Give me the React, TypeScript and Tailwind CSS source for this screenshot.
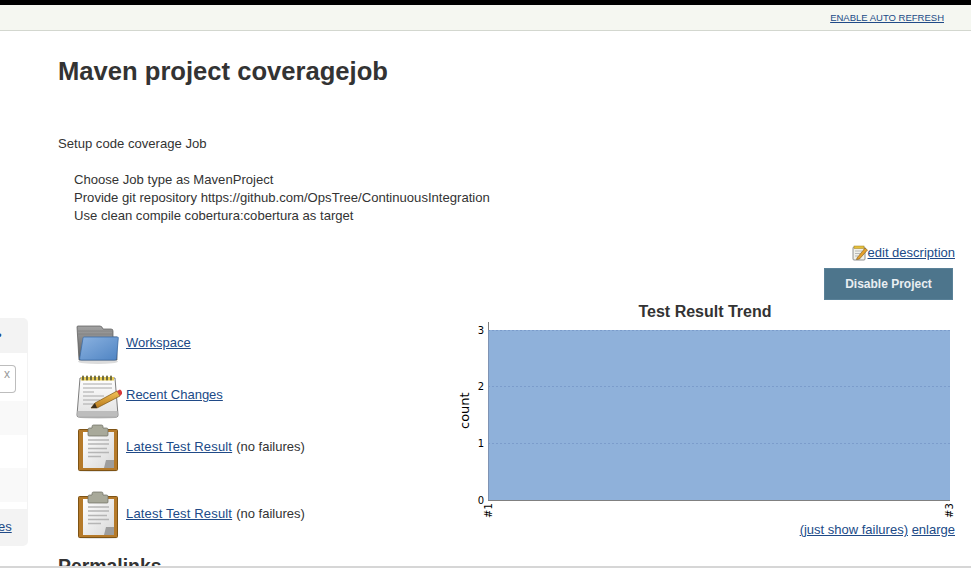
import type { ReactNode } from "react";

function Folder() {
  return (
    <svg width="48" height="48" viewBox="0 0 48 48" className="shrink-0">
      <defs>
        <linearGradient id="fb" x1="0" y1="0" x2="0" y2="1"><stop offset="0" stopColor="#a3a3a3" /><stop offset="1" stopColor="#5c5c5c" /></linearGradient>
        <linearGradient id="ff" x1="0" y1="0" x2="1" y2="1"><stop offset="0" stopColor="#8bb2e0" /><stop offset="1" stopColor="#4f84c3" /></linearGradient>
      </defs>
      <ellipse cx="22" cy="42.500" rx="20" ry="2.500" fill="#dcdcdc" />
      <path d="M1 8 Q1 7 2 7 H24 Q26 7 27 10 H35 Q37 10 37 12 V18 H41 V41 H3 Z" fill="url(#fb)" stroke="#555" strokeWidth="0.7" />
      <path d="M2 12 H36 M2 15 H36" stroke="#808080" strokeWidth="0.8" />
      <path d="M8 18 H41.500 Q42.500 18 42.300 19 L40.500 39.500 Q40.400 41 39 41 H5 Q3.500 41 3.700 39.500 L7 19 Q7.200 18 8 18 Z" fill="url(#ff)" stroke="#3f6ea8" strokeWidth="0.8" />
    </svg>
  );
}

function Notepad() {
  return (
    <svg width="48" height="48" viewBox="0 0 48 48" className="shrink-0">
      <defs>
        <linearGradient id="np" x1="0" y1="0" x2="0" y2="1"><stop offset="0" stopColor="#ffffff" /><stop offset="1" stopColor="#e0e0e0" /></linearGradient>
        <linearGradient id="pen" x1="0" y1="0" x2="0" y2="1"><stop offset="0" stopColor="#f3c45a" /><stop offset="1" stopColor="#b9791b" /></linearGradient>
      </defs>
      <ellipse cx="22" cy="46.500" rx="19" ry="1.500" fill="#e2e2e2" />
      <path d="M4 7 H39 L42 44 Q42 46 40.500 46 H2.500 Q1 46 1 44 Z" fill="url(#np)" stroke="#6e6e6e" strokeWidth="0.9" />
      <path d="M1.500 40 H41.500 V44.500 Q41.500 45.500 40.500 45.500 H2.500 Q1.500 45.500 1.500 44.500 Z" fill="#bdbdbd" />
      <rect x="5" y="6" width="33" height="3.500" fill="#e8cd55" />
      {[6, 10, 14, 18, 22, 26, 30, 34].map((x) => (
        <rect key={x} x={x} y="4.500" width="2" height="5" rx="1" fill="#6e6a3c" />
      ))}
      <path d="M7 13 H36 M7 17 H36 M7 21 H18 M7 25 H28 M7 29 H24 M7 33 H20" stroke="#a8a8a8" strokeWidth="1" />
      <path d="M19 32 L41 20 L44 25 L21 37 L15 37 Z" fill="url(#pen)" stroke="#7d5512" strokeWidth="0.7" />
      <path d="M19 32 L15 37 L21 37 Z" fill="#3a3020" />
      <path d="M41 20 L44 18.500 Q45.500 19 46 21 L46 23 L44 25 Z" fill="#d83a3a" />
    </svg>
  );
}

function Clipboard({ id }: { id: string }) {
  return (
    <svg width="48" height="49" viewBox="0 0 48 49" className="shrink-0">
      <defs>
        <linearGradient id={id} x1="0" y1="0" x2="1" y2="1"><stop offset="0" stopColor="#ffffff" /><stop offset="1" stopColor="#d8d8d8" /></linearGradient>
      </defs>
      <ellipse cx="22" cy="48" rx="19" ry="1" fill="#e2e2e2" />
      <rect x="2.500" y="6.500" width="39" height="41" rx="1" fill="#b57a2a" stroke="#7e5314" strokeWidth="1" />
      <path d="M7 9 H38 V37 L30 45 H7 Z" fill={`url(#${id})`} />
      <path d="M28 45 L30 37 H38 V45 Z" fill="#9d9d9d" />
      <path d="M16 5 V3.500 Q16 2 17.500 2 H25.500 Q27 2 27 3.500 V5 H30.500 Q32 5 32 6.500 V12 Q32 13 31 13 H13 Q12 13 12 12 V6.500 Q12 5 13.500 5 Z" fill="#a8a99a" stroke="#6a6c5e" strokeWidth="0.7" />
      <path d="M12 17 H33 M12 21 H33 M12 25.500 H31 M12 29.500 H33 M12 33.500 H25" stroke="#b5b5b5" strokeWidth="1.600" />
    </svg>
  );
}

function PenIcon() {
  return (
    <svg width="16" height="16" viewBox="0 0 16 16" className="shrink-0">
      <rect x="1" y="2" width="12" height="13" rx="1" fill="#f0f0ea" stroke="#777" strokeWidth="0.8" />
      <rect x="2" y="1" width="10" height="2.500" fill="#e5bf3d" stroke="#a07f1c" strokeWidth="0.5" />
      <path d="M3 6 H10 M3 8.500 H8 M3 11 H6" stroke="#aaa" strokeWidth="0.8" />
      <path d="M5 13 L13 3 L15.500 5 L7.500 14 L4.500 14.500 Z" fill="#e4a02d" stroke="#7a5510" strokeWidth="0.6" />
    </svg>
  );
}

function Chart() {
  return (
    <svg width="513" height="220" viewBox="0 0 513 220" className="block">
      <g style={{ fontFamily: "'DejaVu Sans', sans-serif" }}>
        <text x="255" y="17" textAnchor="middle" fontSize="16" fontWeight="700" fill="#333" style={{ fontFamily: "'Liberation Sans', sans-serif" }}>Test Result Trend</text>
        <rect x="38" y="30" width="462" height="170" fill="#8fb1da" />
        {[30, 86, 143].map((y) => (
          <line key={y} x1="38" x2="500" y1={y + 0.5} y2={y + 0.5} stroke="#7b9ccb" strokeWidth="1" strokeDasharray="2 2" />
        ))}
        <line x1="38.500" x2="38.500" y1="22" y2="30" stroke="#808080" strokeWidth="1" />
        <line x1="38.500" x2="38.500" y1="30" y2="200" stroke="#7f93b3" strokeWidth="1" />
        <line x1="38" x2="500" y1="200.500" y2="200.500" stroke="#808080" strokeWidth="1" />
        {[["3", 34], ["2", 90], ["1", 147], ["0", 204]].map(([t, y]) => (
          <text key={t as string} x="34" y={y as number} textAnchor="end" fontSize="10" fill="#000">{t}</text>
        ))}
        <text transform="translate(19 129) rotate(-90)" fontSize="13" fill="#000">count</text>
        <text transform="translate(42 218) rotate(-90)" fontSize="10" fill="#000">#1</text>
        <text transform="translate(503 218) rotate(-90)" fontSize="10" fill="#000">#3</text>
      </g>
    </svg>
  );
}

function Row({ icon, href, note, className, linkClass }: { icon: ReactNode; href: string; note?: string; className?: string; linkClass?: string }) {
  return (
    <div className={`flex items-center ${className ?? ""}`}>
      {icon}
      <a href="#" className={`ml-[2px] text-[#204a87] underline ${linkClass ?? ""}`}>{href}</a>
      {note && <span className="ml-1">{note}</span>}
    </div>
  );
}

export default function App() {
  return (
    <div className="font-['Liberation_Sans',Arial,sans-serif] h-[568px] w-full overflow-hidden bg-white text-[13px] leading-[18px] text-[#333] flex flex-col">
      <div className="h-[5px] bg-black shrink-0" />
      <div className="h-[26px] shrink-0 bg-[#f5f7f1] border-b border-[#d3d7cf] flex items-center justify-end pr-[27px]">
        <a href="#" className="text-[9.5px] text-[#204a87] underline">ENABLE AUTO REFRESH</a>
      </div>
      <div className="flex-1 min-h-0 flex overflow-hidden">
        <aside className="w-[28px] shrink-0 pt-[287px]">
          <div className="h-[228px] rounded-r-[5px] bg-[#f3f3f3] overflow-hidden flex flex-col pr-[1px]">
            <div className="h-[35px] shrink-0 relative">
              <span className="absolute left-[-3px] top-[8px] text-[#204a87] font-bold">•</span>
            </div>
            <div className="h-[48px] shrink-0 bg-white pt-[12px]">
              <div className="h-[28px] w-[16px] rounded-r-[4px] border border-l-0 border-[#bdbdbd] bg-white flex items-center justify-center pb-[10px] pr-[1px] text-[12px] text-[#999]">x</div>
            </div>
            <div className="h-[34px] shrink-0 bg-[#f9f9f9]" />
            <div className="h-[33px] shrink-0 bg-white" />
            <div className="h-[34px] shrink-0 bg-[#f9f9f9]" />
            <div className="h-[7px] shrink-0 bg-white" />
            <div className="flex-1 leading-[36px]">
              <a href="#" className="block ml-[-2px] text-[#204a87] underline">es</a>
            </div>
          </div>
        </aside>
        <main className="flex-1 min-w-0 pl-[30px] pr-[16px]">
          <h1 className="mt-[24px] text-[25.6px] leading-[32px] font-bold text-[#333]">Maven project coveragejob</h1>
          <p className="mt-[48px] text-[13.1px]">Setup code coverage Job</p>
          <ul className="mt-[18px] pl-[16px] text-[13.1px]">
            <li>Choose Job type as MavenProject</li>
            <li>Provide git repository https://github.com/OpsTree/ContinuousIntegration</li>
            <li>Use clean compile cobertura:cobertura as target</li>
          </ul>
          <div className="mt-[19px] flex justify-end items-center h-[18px]">
            <PenIcon />
            <a href="#" className="text-[#204a87] underline">edit description</a>
          </div>
          <div className="mt-[6px] flex justify-end pr-[2px]">
            <button className="h-[32px] w-[129px] bg-[#4d758c] border border-[#5a8198] text-[12px] font-bold text-[#e9eef2]">Disable Project</button>
          </div>
          <div className="flex">
            <div className="w-[392px] shrink-0 pl-[18px] pt-[19px]">
              <Row icon={<Folder />} href="Workspace" className="h-[48px]" />
              <Row icon={<Notepad />} href="Recent Changes" className="h-[48px] mt-[4px]" />
              <Row icon={<Clipboard id="c1" />} href="Latest Test Result" note="(no failures)" className="h-[48px] mt-[4px]" linkClass="tracking-[0.17px]" />
              <Row icon={<Clipboard id="c2" />} href="Latest Test Result" note="(no failures)" className="h-[48px] mt-[19px]" linkClass="tracking-[0.17px]" />
            </div>
            <div className="flex-1 min-w-0">
              <Chart />
              <div className="mt-[1px] flex justify-end">
                <span><a href="#" className="text-[#204a87] underline">(just show failures)</a> <a href="#" className="text-[#204a87] underline">enlarge</a></span>
              </div>
            </div>
          </div>
          <h2 className="text-[19.4px] font-bold leading-[22px] mt-[16px]">Permalinks</h2>
        </main>
      </div>
      <div className="h-[2px] shrink-0 bg-[#d6d6d6]" />
    </div>
  );
}
